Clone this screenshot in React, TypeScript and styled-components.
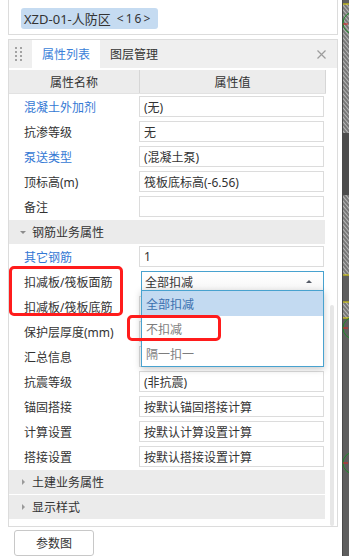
import styled, { createGlobalStyle } from "styled-components";

const GlobalStyle = createGlobalStyle`
  html, body { margin: 0; padding: 0; background: #ffffff; }
  body {
    font-family: "Noto Sans", "Noto Sans CJK SC", sans-serif;
    font-size: 12px;
    color: #333333;
  }
  * { box-sizing: border-box; }
`;

const Screen = styled.div`
  display: flex;
  width: 349px;
  height: 556px;
  overflow: hidden;
`;

const Side = styled.div`
  width: 342px;
  padding: 0 4px 0 8px;
  display: flex;
  flex-direction: column;
`;

const TopPanel = styled.div`
  height: 37px;
  border: 1px solid #dcdcdc;
  border-top: none;
  padding: 8px 12px 0;
`;

const Tag = styled.span`
  display: inline-flex;
  align-items: center;
  height: 21px;
  padding: 0 6px 0 3px;
  border-radius: 3px;
  background: #c5dbf1;
  color: #333333;
  font-size: 13px;
  white-space: pre;
`;

const TagCount = styled.span`
  margin-left: 6px;
  letter-spacing: 2px;
  font-size: 12px;
`;

const PropsPanel = styled.div`
  margin-top: 4px;
  height: 499px;
  border: 1px solid #dcdcdc;
  display: flex;
  flex-direction: column;
`;

const TabBar = styled.div`
  height: 28px;
  flex-shrink: 0;
  background: #efefef;
  display: flex;
  align-items: stretch;
  padding-left: 6px;
`;

const Grip = styled.div`
  align-self: center;
  display: grid;
  grid-template-columns: repeat(2, 2px);
  grid-auto-rows: 2px;
  column-gap: 3px;
  row-gap: 1.7px;
  margin-right: 10px;
  span { background: #a3a3a3; }
`;

const Tab = styled.div<{ $active?: boolean }>`
  width: 68px;
  display: flex;
  align-items: center;
  justify-content: center;
  background: ${({ $active }) => ($active ? "#ffffff" : "transparent")};
  color: ${({ $active }) => ($active ? "#3b7fd9" : "#333333")};
`;

const CloseBtn = styled.div`
  margin-left: auto;
  width: 26px;
  display: flex;
  align-items: center;
  justify-content: center;
  padding-right: 6px;
`;

const TableArea = styled.div`
  flex: 1;
  display: flex;
  padding-top: 2px;
`;

const Grid = styled.div`
  width: 317px;
  display: flex;
  flex-direction: column;
`;

const HeaderRow = styled.div`
  display: grid;
  grid-template-columns: 130px 187px;
  height: 24px;
  background: #ececec;
  border-bottom: 1px solid #e2e2e2;
`;

const HeaderCell = styled.div<{ $last?: boolean }>`
  display: flex;
  align-items: center;
  justify-content: center;
  border-left: ${({ $last }) => ($last ? "1px solid #d6d6d6" : "none")};
  border-right: ${({ $last }) => ($last ? "1px solid #d6d6d6" : "none")};
`;

const Rows = styled.div`
  position: relative;
  display: flex;
  flex-direction: column;
`;

const Row = styled.div`
  display: grid;
  grid-template-columns: 130px 187px;
  height: 25px;
`;

const Label = styled.div<{ $link?: boolean }>`
  display: flex;
  align-items: center;
  padding-left: 15px;
  color: ${({ $link }) => ($link ? "#3478d4" : "#333333")};
  white-space: nowrap;
`;

const ValueCell = styled.div`
  position: relative;
  padding: 2px 2px 2px 0;
`;

const ValueBox = styled.div`
  height: 21px;
  border: 1px solid #dcdcdc;
  padding-left: 4px;
  display: flex;
  align-items: center;
  white-space: nowrap;
`;

const Select = styled.div`
  position: relative;
  height: 21px;
  margin-left: 2px;
  border: 1px solid #48a2cf;
  padding: 0 0 0 3px;
  display: flex;
  align-items: center;
  background: linear-gradient(#ffffff, #f7f7f7);
`;

const UpCaret = styled.span`
  margin-left: auto;
  margin-right: 11px;
  width: 0;
  height: 0;
  border-left: 3px solid transparent;
  border-right: 3px solid transparent;
  border-bottom: 3px solid #555b66;
`;

const Options = styled.div`
  position: absolute;
  z-index: 5;
  left: -1px;
  right: -1px;
  top: calc(100% - 1px);
  border: 1px solid #48a2cf;
  background: #ffffff;
  box-shadow: 0 2px 7px rgba(0, 0, 0, 0.22);
`;

const Option = styled.div<{ $selected?: boolean }>`
  height: 25px;
  display: flex;
  align-items: center;
  padding-left: 4px;
  background: ${({ $selected }) => ($selected ? "#c3daf1" : "#ffffff")};
  color: ${({ $selected }) => ($selected ? "#3a6fae" : "#7d7d7d")};
`;

const GroupRow = styled.div`
  height: 25px;
  padding: 1px 1px 0 0;
`;

const GroupBar = styled.div`
  height: 24px;
  background: #ebebeb;
  display: flex;
  align-items: center;
  padding-left: 11px;
  gap: 6px;
`;

const Caret = styled.span<{ $open?: boolean }>`
  width: 0;
  height: 0;
  ${({ $open }) =>
    $open
      ? `border-left: 3px solid transparent;
         border-right: 3px solid transparent;
         border-top: 3px solid #8c8c8c;`
      : `border-top: 3px solid transparent;
         border-bottom: 3px solid transparent;
         border-left: 3px solid #9a9a9a;
         margin: 0 1px 0 2px;`}
`;

const Mark = styled.div<{ $left: number; $top: number; $w: number; $h: number }>`
  position: absolute;
  z-index: 10;
  left: ${({ $left }) => $left}px;
  top: ${({ $top }) => $top}px;
  width: ${({ $w }) => $w}px;
  height: ${({ $h }) => $h}px;
  border: 3px solid #ff1c1c;
  border-radius: 5px;
  pointer-events: none;
`;

const ScrollCol = styled.div`
  width: 11px;
  padding-left: 4px;
`;

const Thumb = styled.div`
  width: 4px;
  height: 221px;
  margin-top: 235px;
  border-radius: 2px;
  background: #e7e7e7;
`;

const Button = styled.div`
  margin: 3px 0 0 6px;
  width: 80px;
  height: 26px;
  flex-shrink: 0;
  border: 1px solid #c8c8c8;
  border-radius: 3px;
  display: flex;
  align-items: center;
  justify-content: center;
  background: #ffffff;
`;

const CadStrip = styled.div`
  width: 7px;
  height: 556px;
  flex-shrink: 0;
  svg { display: block; }
`;

type Item =
  | { kind: "row"; label: string; value?: string; link?: boolean; select?: boolean }
  | { kind: "group"; label: string; open?: boolean };

// values of the rows under the open list are hidden by it
const items: Item[] = [
  { kind: "row", label: "混凝土外加剂", value: "(无)", link: true },
  { kind: "row", label: "抗渗等级", value: "无" },
  { kind: "row", label: "泵送类型", value: "(混凝土泵)", link: true },
  { kind: "row", label: "顶标高(m)", value: "筏板底标高(-6.56)" },
  { kind: "row", label: "备注", value: "" },
  { kind: "group", label: "钢筋业务属性", open: true },
  { kind: "row", label: "其它钢筋", value: "1", link: true },
  { kind: "row", label: "扣减板/筏板面筋", value: "全部扣减", select: true },
  { kind: "row", label: "扣减板/筏板底筋", value: "" },
  { kind: "row", label: "保护层厚度(mm)", value: "" },
  { kind: "row", label: "汇总信息", value: "" },
  { kind: "row", label: "抗震等级", value: "(非抗震)" },
  { kind: "row", label: "锚固搭接", value: "按默认锚固搭接计算" },
  { kind: "row", label: "计算设置", value: "按默认计算设置计算" },
  { kind: "row", label: "搭接设置", value: "按默认搭接设置计算" },
  { kind: "group", label: "土建业务属性" },
  { kind: "group", label: "显示样式" },
];

const options = ["全部扣减", "不扣减", "隔一扣一"];

const CloseIcon = () => (
  <svg width="9" height="9" viewBox="0 0 9 9">
    <path d="M0.5 0.5 L8.5 8.5 M8.5 0.5 L0.5 8.5" stroke="#9c9c9c" strokeWidth="1.2" />
  </svg>
);

const CadCanvas = () => (
  <CadStrip>
    <svg width="7" height="556" viewBox="0 0 7 556">
      <defs>
        <pattern id="hatch" width="3" height="3" patternUnits="userSpaceOnUse" patternTransform="rotate(-40)">
          <rect width="3" height="3" fill="#777777" />
          <line x1="0.5" y1="0" x2="0.5" y2="3" stroke="#b8b8b8" strokeWidth="1" />
        </pattern>
      </defs>
      <rect width="7" height="556" fill="#5e5e5e" />
      <rect x="0" y="0" width="1" height="556" fill="#4a4a4a" />
      <rect x="1" y="4" width="6" height="271" fill="url(#hatch)" />
      <rect x="1" y="133" width="6" height="62" fill="#4c4c4c" />
      <rect x="1" y="302" width="6" height="16" fill="url(#hatch)" />
      <line x1="1" y1="4" x2="7" y2="4" stroke="#e6d800" strokeWidth="1" />
      <line x1="1" y1="275" x2="7" y2="275" stroke="#e6d800" strokeWidth="1" />
      <line x1="1" y1="302" x2="7" y2="302" stroke="#e6d800" strokeWidth="1" />
      <line x1="1" y1="318" x2="7" y2="318" stroke="#e6d800" strokeWidth="1" />
      <circle cx="12" cy="23" r="11" fill="none" stroke="#1f8a2a" strokeWidth="1" />
      <line x1="1" y1="24" x2="6" y2="24" stroke="#e02020" strokeWidth="1" />
      <circle cx="12" cy="328" r="11" fill="none" stroke="#1f8a2a" strokeWidth="1" />
      <line x1="1" y1="328" x2="6" y2="328" stroke="#e02020" strokeWidth="1" />
      <circle cx="12" cy="463" r="11" fill="none" stroke="#1f8a2a" strokeWidth="1" />
      <line x1="1" y1="463" x2="6" y2="463" stroke="#e02020" strokeWidth="1" />
    </svg>
  </CadStrip>
);

export default function App() {
  return (
    <>
      <GlobalStyle />
      <Screen>
        <Side>
          <TopPanel>
            <Tag>
              XZD-01-人防区
              <TagCount>&lt;16&gt;</TagCount>
            </Tag>
          </TopPanel>
          <PropsPanel>
            <TabBar>
              <Grip>
                {Array.from({ length: 8 }).map((_, i) => (
                  <span key={i} />
                ))}
              </Grip>
              <Tab $active>属性列表</Tab>
              <Tab>图层管理</Tab>
              <CloseBtn>
                <CloseIcon />
              </CloseBtn>
            </TabBar>
            <TableArea>
              <Grid>
                <HeaderRow>
                  <HeaderCell>属性名称</HeaderCell>
                  <HeaderCell $last>属性值</HeaderCell>
                </HeaderRow>
                <Rows>
                  {items.map((it) =>
                    it.kind === "group" ? (
                      <GroupRow key={it.label}>
                        <GroupBar>
                          <Caret $open={it.open} />
                          {it.label}
                        </GroupBar>
                      </GroupRow>
                    ) : (
                      <Row key={it.label}>
                        <Label $link={it.link}>{it.label}</Label>
                        <ValueCell>
                          {it.select ? (
                            <Select>
                              {it.value}
                              <UpCaret />
                              <Options>
                                {options.map((o, i) => (
                                  <Option key={o} $selected={i === 0}>
                                    {o}
                                  </Option>
                                ))}
                              </Options>
                            </Select>
                          ) : (
                            <ValueBox>{it.value}</ValueBox>
                          )}
                        </ValueCell>
                      </Row>
                    )
                  )}
                  <Mark $left={0} $top={172} $w={114} $h={50} />
                  <Mark $left={118} $top={221} $w={94} $h={26} />
                </Rows>
              </Grid>
              <ScrollCol>
                <Thumb />
              </ScrollCol>
            </TableArea>
          </PropsPanel>
          <Button>参数图</Button>
        </Side>
        <CadCanvas />
      </Screen>
    </>
  );
}
